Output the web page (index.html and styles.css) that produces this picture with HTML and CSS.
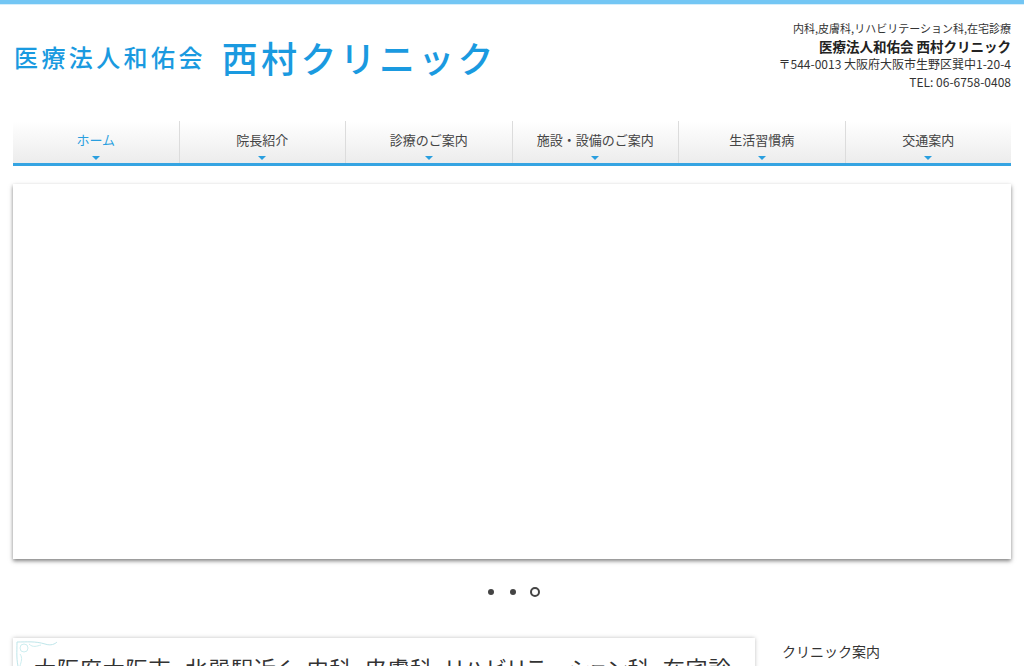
FILE: index.html
```html
<!DOCTYPE html>
<html lang="ja">
<head>
  <meta charset="UTF-8" />
  <meta name="viewport" content="width=device-width, initial-scale=1.0" />
  <title>医療法人和佑会 西村クリニック</title>
  <link rel="stylesheet" href="styles.css">
</head>
<body>

  <div class="top-bar"></div>

  <div class="wrap">
    <!-- Header -->
    <header class="site-header">
      <h1 class="logo">
        <span class="logo-corp">医療法人和佑会</span>
        <span class="logo-name">西村クリニック</span>
      </h1>
      <div class="header-info">
        <p class="info-dept">内科,皮膚科,リハビリテーション科,在宅診療</p>
        <p class="info-name">医療法人和佑会 西村クリニック</p>
        <p>〒544-0013 大阪府大阪市生野区巽中1-20-4</p>
        <p>TEL: 06-6758-0408</p>
      </div>
    </header>

    <!-- Global nav -->
    <nav class="gnav">
      <a href="#" class="current">ホーム</a>
      <a href="#">院長紹介</a>
      <a href="#">診療のご案内</a>
      <a href="#">施設・設備のご案内</a>
      <a href="#">生活習慣病</a>
      <a href="#">交通案内</a>
    </nav>

    <!-- Slider -->
    <div class="slider"></div>
    <div class="slider-dots">
      <span class="dot"></span>
      <span class="dot"></span>
      <span class="dot active"></span>
    </div>

    <!-- Content -->
    <div class="content">
      <main class="main-box">
        <svg class="corner" width="44" height="40" viewBox="0 0 44 40">
          <path d="M2 2 C12 2 20 1 30 4 C36 6 40 4 42 2" fill="none" stroke="#bfe6ea" stroke-width="1"/>
          <path d="M2 2 C2 12 1 20 4 30 C6 36 4 38 2 40" fill="none" stroke="#bfe6ea" stroke-width="1"/>
          <circle cx="9" cy="8" r="4" fill="none" stroke="#cdeef0" stroke-width="1"/>
          <path d="M14 4 C18 8 22 6 26 5" fill="none" stroke="#cdeef0" stroke-width="1"/>
          <path d="M5 14 C8 18 6 22 5 26" fill="none" stroke="#cdeef0" stroke-width="1"/>
        </svg>
        <h2 class="main-title">大阪府大阪市 北巽駅近く 内科・皮膚科・リハビリテーション科・在宅診療</h2>
      </main>
      <aside class="side">
        <h3 class="side-title">クリニック案内</h3>
      </aside>
    </div>
  </div>

</body>
</html>
```

FILE: styles.css
```css
* {
  box-sizing: border-box;
}
body {
  margin: 0;
  font-family: "Noto Sans CJK JP", "Noto Sans", "Liberation Sans", sans-serif;
  color: #333;
  background: #fff;
}
p, h1, h2, h3 {
  margin: 0;
}
.top-bar {
  height: 5px;
  background: #73c6f4;
  border-bottom: 1px solid #d6eefb;
}
.wrap {
  width: 998px;
  margin: 0 auto;
}
.site-header {
  display: flex;
  justify-content: space-between;
  align-items: flex-start;
  height: 116px;
  padding-top: 14px;
}
.logo {
  display: flex;
  align-items: center;
  gap: 16px;
  margin-top: 20px;
  color: #1a9ae0;
  font-weight: 500;
  line-height: 1;
}
.logo-corp {
  font-size: 24px;
  letter-spacing: 3.4px;
  margin-left: 1px;
}
.logo-name {
  font-size: 36px;
  letter-spacing: 3.3px;
}
.header-info {
  text-align: right;
  font-size: 12px;
  line-height: 18px;
  color: #333;
}
.info-dept {
  font-size: 11px;
}
.info-name {
  font-size: 13.5px;
  font-weight: bold;
  color: #222;
}
.gnav {
  display: flex;
  height: 45px;
  border-bottom: 3px solid #35a4e2;
  background: linear-gradient(to bottom, #ffffff, #ececec);
}
.gnav a {
  position: relative;
  flex: 1;
  display: flex;
  justify-content: center;
  padding-top: 9px;
  font-size: 13px;
  color: #444;
  text-decoration: none;
  border-left: 1px solid #dcdcdc;
}
.gnav a:first-child {
  border-left: none;
}
.gnav a::after {
  content: "";
  position: absolute;
  left: 50%;
  bottom: 3px;
  margin-left: -4px;
  border-left: 4px solid transparent;
  border-right: 4px solid transparent;
  border-top: 4px solid #2a9fdf;
}
.gnav a.current {
  color: #2a9fdf;
}
.slider {
  height: 375px;
  margin-top: 18px;
  background: #fff;
  box-shadow: 0 2px 4px rgba(0, 0, 0, 0.5);
}
.slider-dots {
  display: flex;
  justify-content: center;
  align-items: center;
  gap: 16px;
  height: 66px;
  padding-left: 4px;
}
.dot {
  width: 6px;
  height: 6px;
  border-radius: 50%;
  background: #444;
}
.dot.active {
  width: 10px;
  height: 10px;
  margin-left: -2px;
  background: #fff;
  border: 2px solid #444;
}
.content {
  display: flex;
  gap: 27px;
  margin-top: 13px;
}
.main-box {
  position: relative;
  width: 742px;
  height: 200px;
  padding: 13px 14px 13px 21px;
  background: #fff;
  box-shadow: 0 0 4px rgba(0, 0, 0, 0.25);
}
.corner {
  position: absolute;
  top: 2px;
  left: 2px;
}
.main-title {
  font-size: 22px;
  font-weight: normal;
  line-height: 32px;
  color: #333;
  font-feature-settings: "palt";
  letter-spacing: 0.9px;
  word-spacing: 8px;
}
.side {
  flex: 1;
}
.side-title {
  font-size: 14px;
  font-weight: normal;
  padding-top: 3px;
  color: #333;
}
```
